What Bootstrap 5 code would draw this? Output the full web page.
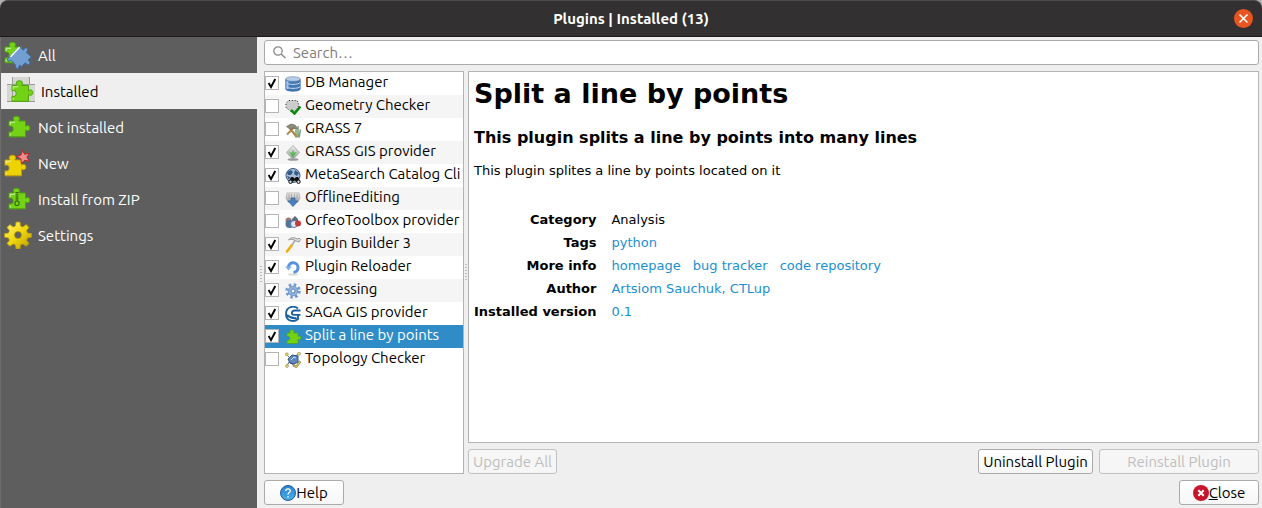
<!DOCTYPE html>
<html lang="en">
<head>
<meta charset="utf-8">
<meta name="viewport" content="width=device-width, initial-scale=1">
<title>Plugins | Installed (13)</title>
<link href="https://cdn.jsdelivr.net/npm/bootstrap@5.3.0/dist/css/bootstrap.min.css" rel="stylesheet">
<style>
  body { font: 15px/20px Ubuntu, "Noto Sans", sans-serif; color: #000; background: #efefef; }
  svg { flex: none; display: block; }
  .titlebar { height: 37px; background: #323030; border-top: 1px solid #4b4b4b; border-bottom: 1px solid #1c1c1c; border-radius: 8px 8px 0 0; color: #fff; font-weight: 700; }
  .frame { background: #b5b0ae; }
  .win-close { right: 9px; top: 8px; width: 19px; height: 19px; border: 0; padding: 0; border-radius: 50%; background: #e95420; }
  .sidebar { width: 257px; background: #5e5e5e; border-left: 1px solid #6c6c6c; }
  .side-link { height: 36px; padding-left: 3px; gap: 6px; color: #fff; text-decoration: none; }
  .side-link span { padding-top: 2px; }
  .side-link.current { background: #efefef; color: #000; padding-left: 6px; }
  .workspace { padding: 3px 3px 3px 7px; gap: 6px; min-width: 0; }
  .search { height: 25px; border: 1px solid #aaa; border-radius: 3px; background: #fff; padding: 0 8px; gap: 7px; }
  .search input { border: 0; outline: 0; background: none; padding: 0; min-width: 0; line-height: 20px; }
  .search input::placeholder { color: #7e7e7e; opacity: 1; }
  .panel { background: #fff; border: 1px solid #b4b4b4; }
  .plugins { width: 200px; overflow: hidden; }
  .plugins label { height: 23px; gap: 4px; white-space: nowrap; }
  .plugins label span { padding-bottom: 4px; }
  .plugins li:nth-child(even) { background: #f5f5f5; }
  .plugins li.chosen { background: #308cc6; color: #fff; }
  .plugins svg { margin: 0 0 0 2px; }
  .tick { appearance: none; flex: none; width: 14px; height: 14px; margin: 0 0 1px; border: 1px solid #b4b4b4; background: #fff; }
  .tick:checked { background: #fff url("data:image/svg+xml,%3Csvg xmlns='http://www.w3.org/2000/svg' viewBox='0 0 12 12'%3E%3Cpath d='M2.6 6l2.4 4L9.3 2' fill='none' stroke='%23000' stroke-width='1.9'/%3E%3C/svg%3E"); }
  .splitter { width: 4px; }
  .grip { width: 2px; height: 17px; background: repeating-linear-gradient(#bbb 0 1px, transparent 1px 3px); }
  .grip-left { left: 260px; top: 229px; }
  .details { font-family: "DejaVu Sans", sans-serif; font-size: 13px; line-height: 23px; padding: 5px; overflow: auto; }
  .details h1 { font-size: 27px; line-height: 34px; font-weight: 700; margin: 0 0 17px; }
  .details h2 { font-size: 16px; line-height: 20px; font-weight: 700; margin: 0 0 11px; }
  .details p { margin: 0 0 26px; }
  .details th { text-align: right; padding: 0 15px 0 0; }
  .details td { padding: 0 12px 0 0; }
  .details a { color: #1a90d0; text-decoration: none; }
  .details td a + a { margin-left: 12px; }
  .actions { gap: 6px; margin-top: 6px; }
  .push { height: 25px; border: 1px solid #aaa; border-radius: 3px; padding: 0 2px; line-height: 20px; color: #000; background: linear-gradient(#fff, #f6f6f6); min-width: 80px; }
  .push:disabled { color: #bebebe; border-color: #c2c2c2; background: #f6f6f6; opacity: 1; }
  .push-wide { min-width: 160px; }
  .push-mid { min-width: 115px; }
  .push-small { min-width: 89px; }
</style>
</head>
<body>
<svg width="0" height="0" class="position-absolute" aria-hidden="true">
  <defs>
    <linearGradient id="gold" x1="0" y1="0" x2="1" y2="1"><stop offset="0" stop-color="#fff27a"/><stop offset=".5" stop-color="#f0d60c"/><stop offset="1" stop-color="#b99a00"/></linearGradient>
    <linearGradient id="lens" x1="0" y1="0" x2="0" y2="1"><stop offset="0" stop-color="#2c7fd0"/><stop offset="1" stop-color="#49b0ea"/></linearGradient>
    <linearGradient id="silver" x1="0" y1="0" x2="0" y2="1"><stop offset="0" stop-color="#f2f2f2"/><stop offset="1" stop-color="#9b9b9b"/></linearGradient>
    <path id="piece" d="M1 5h4.800c.7 0-.6-1-.6-2.200a3.200 2.600 0 0 1 6.400 0c0 1.200-1.300 2.200-.6 2.200H17.500v5.200c1-1 4.300-1.500 4.300 1.900s-3.300 2.900-4.300 1.900v6.800H1v-5c2.800.8 4.200-.7 4.200-2.800S3.800 9.300 1 10.300z"/>
    <path id="shine" d="M2.200 9V6.200h5M2.200 19.500v-2" fill="none" stroke="#fff" stroke-opacity=".7"/>
  </defs>
</svg>
<div class="d-flex flex-column min-vh-100">
  <div class="frame">
    <header class="titlebar position-relative d-flex align-items-center justify-content-center">
      <span>Plugins | Installed (13)</span>
      <button class="win-close position-absolute" aria-label="Close window"><svg width="19" height="19" viewBox="0 0 19 19"><path d="M5.500 5.500l8 8m0-8l-8 8" stroke="#fff" stroke-width="1.600"/></svg></button>
    </header>
  </div>
  <div class="d-flex flex-grow-1 position-relative">
    <nav class="sidebar flex-shrink-0">
      <a href="#" class="side-link d-flex align-items-center">
        <svg width="28" height="28" viewBox="0 0 28 28"><g transform="translate(0 1)"><use href="#piece" fill="#73d216" stroke="#4fa30a"/><use href="#shine"/></g>
          <path d="M5 16.500L15.500 5.500l3.800 3.800c1-.4.700-3 3.300-2.300 2 1 .6 3-.3 4.500l5 4.300-3.300 3.200c.5.800 3.200 2.200 1.200 4.300-1.700 1-3-.5-4-1.500l-3.500 3.600-2.200-1.200-1.300 3.300-2.200-.1-.6-3.500-4-4.400-3.200.6-.8-2z" fill="#729fcf" stroke="#3a6cab"/><path d="M6.500 15.800l9-9.500" stroke="#fff" stroke-width="1.500"/></svg>
        <span>All</span></a>
      <a href="#" class="side-link current d-flex align-items-center" aria-current="page">
        <svg width="28" height="28" viewBox="0 0 28 28"><path d="M5 0h17v7h6v18h-6v-1H0V7h5z" fill="#d3d7cf"/><path d="M5.500 0v24M22.500 0v7M0 7.500h28M0 24.500h28" stroke="#999b96"/><g transform="translate(4 3.500)"><use href="#piece" fill="#73d216" stroke="#4fa30a"/><use href="#shine"/></g></svg>
        <span>Installed</span></a>
      <a href="#" class="side-link d-flex align-items-center">
        <svg width="28" height="28" viewBox="0 0 28 28"><g transform="translate(4 3)"><use href="#piece" fill="#73d216" stroke="#4fa30a"/><use href="#shine"/></g></svg>
        <span>Not installed</span></a>
      <a href="#" class="side-link d-flex align-items-center">
        <svg width="28" height="28" viewBox="0 0 28 28"><g transform="translate(0 6)"><use href="#piece" fill="#edd400" stroke="#c4a000"/><use href="#shine"/></g><path d="M18.500 1.500l2.200 3.800 5-1.200-2.800 4 2.500 4.200-4.700-1-3.300 3.500-.5-5-4.500-2.200 4.500-1.600z" fill="#f28b8b" stroke="#b82525"/></svg>
        <span>New</span></a>
      <a href="#" class="side-link d-flex align-items-center">
        <svg width="28" height="28" viewBox="0 0 28 28"><g transform="translate(4 3)"><use href="#piece" fill="#73d216" stroke="#4fa30a"/><use href="#shine"/><path d="M9 4v9" stroke="#33650b" stroke-width="3" stroke-dasharray="1 1.200"/><path d="M9 4v10" stroke="#33650b" stroke-width=".6"/><rect x="7" y="13" width="4" height="4.500" rx="1.500" fill="none" stroke="#33650b" stroke-width="1.200"/></g></svg>
        <span>Install from ZIP</span></a>
      <a href="#" class="side-link d-flex align-items-center">
        <svg width="28" height="28" viewBox="0 0 28 28"><path fill="url(#gold)" stroke="#b59a00" stroke-width=".8" fill-rule="evenodd" d="M12 1h4l.6 4 2.200.9 3.400-2.300 2.800 2.800-2.400 3.300 1 2.300 3.900.6v3.600l-3.900.7-1 2.300 2.400 3.300-2.800 2.800-3.400-2.300-2.200.9-.6 4h-4l-.6-4-2.200-.9-3.400 2.300L3 22.500l2.400-3.300-1-2.300-3.900-.7v-3.600l3.900-.6 1-2.300L3 6.400l2.800-2.800 3.400 2.300 2.200-.9zM14 10.500a3.500 3.500 0 1 0 0 7 3.500 3.500 0 0 0 0-7z"/></svg>
        <span>Settings</span></a>
    </nav>
    <span class="grip grip-left position-absolute"></span>
    <main class="workspace d-flex flex-column flex-grow-1">
      <div class="search d-flex align-items-center">
        <svg width="13" height="13" viewBox="0 0 13 13"><circle cx="5" cy="5" r="4.200" fill="none" stroke="#8a8a8a" stroke-width="1.300"/><path d="M8 8l4.500 4" stroke="#8a8a8a" stroke-width="1.500"/></svg>
        <input class="flex-grow-1" type="search" placeholder="Search…" aria-label="Search plugins">
      </div>
      <div class="d-flex flex-grow-1">
        <ul class="plugins panel list-unstyled mb-0 flex-shrink-0">
          <li><label class="d-flex align-items-center"><input class="tick" type="checkbox" checked><svg width="16" height="16" viewBox="0 0 16 16"><path d="M.7 3v10c0 3 14.600 3 14.600 0V3" fill="#4377b2" stroke="#3467a4" stroke-width=".6"/><path d="M1 6.500c1 2.500 13 2.500 14 0M1 10.500c1 2.500 13 2.500 14 0" fill="none" stroke="#c5daf2"/><path d="M2.500 5v8" stroke="#a9c6e6" stroke-width="2"/><ellipse cx="8" cy="3" rx="7.300" ry="2.300" fill="#b9cde4" stroke="#6088b9" stroke-width=".6"/></svg><span>DB Manager</span></label></li>
          <li><label class="d-flex align-items-center"><input class="tick" type="checkbox"><svg width="16" height="16" viewBox="0 0 16 16"><path d="M4 1.500h8L14 6l-3 6-5 .5L1 8.500V4z" fill="#ccc" stroke="#222" stroke-dasharray="1 1.800"/><path d="M6 11l3.500 3.500L15.500 7.500" fill="none" stroke="#078a0b" stroke-width="2.500"/></svg><span>Geometry Checker</span></label></li>
          <li><label class="d-flex align-items-center"><input class="tick" type="checkbox"><svg width="16" height="16" viewBox="0 0 16 16"><path d="M11 15.500V8m2 7.500V4m1 11.500l1.500-8M11 15L8 9" stroke="#74a17a" stroke-width="1.500"/><path d="M2 12.500l7-7M5 7l7 8" stroke="#b38a4d" stroke-width="2"/><path d="M1.500 4.500L6 2l4 1 2.500 3.500-1.500 1L8 5.500 6 8 4 6.500z" fill="#8c8d78" stroke="#4d4d42" stroke-width=".5"/></svg><span>GRASS 7</span></label></li>
          <li><label class="d-flex align-items-center"><input class="tick" type="checkbox" checked><svg width="16" height="16" viewBox="0 0 16 16"><ellipse cx="8" cy="14.500" rx="5.500" ry="1.300" fill="#999"/><path d="M8 .5l6.500 7L8 14.500 1.500 7.500z" fill="url(#silver)" stroke="#999" stroke-width=".7"/><path d="M8 13L4 6.500l3 1.500 1-4 1 4 3-1.500z" fill="#58b957"/></svg><span>GRASS GIS provider</span></label></li>
          <li><label class="d-flex align-items-center"><input class="tick" type="checkbox" checked><svg width="16" height="16" viewBox="0 0 16 16"><circle cx="8" cy="7.500" r="7" fill="#a8bfd8" stroke="#345a87"/><path d="M2 4l4-2 2 2-2 3H3zM10 2l4 3-2 3-3-2zM2 8l3 1-1 3z" fill="#345a87"/><path d="M4 13l2-4h2l1.500 1.500L11 9h2l2.500 4.500h-4l-2-1-2 1.500z" fill="#111"/><circle cx="5.500" cy="13.800" r="1.700" fill="#ddd" stroke="#111"/><circle cx="13.500" cy="13.800" r="1.700" fill="#ddd" stroke="#111"/></svg><span>MetaSearch Catalog Cli</span></label></li>
          <li><label class="d-flex align-items-center"><input class="tick" type="checkbox"><svg width="16" height="16" viewBox="0 0 16 16"><path d="M2 2h12l1 5-2 4H3L1 7z" fill="url(#silver)" stroke="#999" stroke-width=".6"/><path d="M4 3v5m2.500-5v5m3-5v5M12 3v5" stroke="#aaa"/><path d="M6 7h4v3h3l-5 5.500L3 10h3z" fill="#4c7fc1" stroke="#2d5f9e" stroke-width=".7"/></svg><span>OfflineEditing</span></label></li>
          <li><label class="d-flex align-items-center"><input class="tick" type="checkbox"><svg width="16" height="16" viewBox="0 0 16 16"><circle cx="3.500" cy="6.500" r="3" fill="#a17777"/><circle cx="4.500" cy="10" r="4" fill="#52739b"/><path d="M7 5l3-3 3 3v7l-3 1-4-3z" fill="#5c6b83"/><circle cx="9" cy="10" r="3.500" fill="#dce8f4" stroke="#52739b"/><circle cx="13" cy="9.500" r="3" fill="#c43a3a"/></svg><span>OrfeoToolbox provider</span></label></li>
          <li><label class="d-flex align-items-center"><input class="tick" type="checkbox" checked><svg width="16" height="16" viewBox="0 0 16 16"><path d="M10 3.500L6 9.500" stroke="#aaa" stroke-width="1.700"/><path d="M6.500 8.500L2 14.500" stroke="#efac14" stroke-width="2.600" stroke-linecap="round"/><path d="M3.500 3C5.500.5 8.500 0 11 1.500l2 .5 1-1 1.500 1.500L14 5l-4-1.500C7.500 2 6 2 3.500 3z" fill="#ddd" stroke="#888" stroke-width=".8"/></svg><span>Plugin Builder 3</span></label></li>
          <li><label class="d-flex align-items-center"><input class="tick" type="checkbox" checked><svg width="16" height="16" viewBox="0 0 16 16"><ellipse cx="8" cy="14.500" rx="5" ry="1.200" fill="#ddd"/><path d="M3.500 7.500C3.500 1 13 1.500 13 7.500c0 2.500-1.500 4.800-4.500 4.800" fill="none" stroke="#5891dc" stroke-width="3"/><path d="M0 6.500h7L3.500 10.500z" fill="#7fb0ec"/></svg><span>Plugin Reloader</span></label></li>
          <li><label class="d-flex align-items-center"><input class="tick" type="checkbox" checked><svg width="16" height="16" viewBox="0 0 16 16"><circle cx="8" cy="8" r="6.200" fill="none" stroke="#6f9bd0" stroke-width="3" stroke-dasharray="2.430 2.430"/><circle cx="8" cy="8" r="4.800" fill="#8fb2de" stroke="#5c89bf" stroke-width=".7"/><circle cx="8" cy="8" r="2" fill="#f5f5f5" stroke="#5c89bf"/></svg><span>Processing</span></label></li>
          <li><label class="d-flex align-items-center"><input class="tick" type="checkbox" checked><svg width="16" height="16" viewBox="0 0 16 16"><path d="M13 2.500C9-.8 1 .5 1 8s8 8.500 12 5V8.800H9M15.500 4.500H10C6.500 4.500 5.500 8.800 9 8.800h6.500M2 9c2 2 5 3.500 9.500 3" fill="none" stroke="#1a5f9e" stroke-width="1.800"/></svg><span>SAGA GIS provider</span></label></li>
          <li class="chosen"><label class="d-flex align-items-center"><input class="tick" type="checkbox" checked><svg width="16" height="16" viewBox="-2 -1 24 24"><use href="#piece" fill="#73d216" stroke="#4fa30a"/></svg><span>Split a line by points</span></label></li>
          <li><label class="d-flex align-items-center"><input class="tick" type="checkbox"><svg width="16" height="16" viewBox="0 0 16 16"><path d="M1.500 2.500L4 5M10 4l4-2M2 14l2-4 6 4" fill="none" stroke="#666"/><path d="M3 7l4-4 6 1v6l-4 2-4-1z" fill="#5f88bd" stroke="#2d5482"/><path d="M6 8l3-3 2 1" fill="none" stroke="#cfe0f3"/><path d="M9 12.500l2 1.500L14.500 9l1.300 1-4.300 5.800L8 14z" fill="#e8d36c" stroke="#776b28" stroke-width=".7"/><g fill="#ecd940" stroke="#888" stroke-width=".6"><circle cx="1.800" cy="2.300" r="1.500"/><circle cx="2" cy="14" r="1.500"/><circle cx="14" cy="1.800" r="1.500"/></g></svg><span>Topology Checker</span></label></li>
        </ul>
        <div class="splitter flex-shrink-0 d-flex justify-content-center align-items-center"><span class="grip"></span></div>
        <div class="d-flex flex-column flex-grow-1">
          <article class="details panel flex-grow-1">
            <h1>Split a line by points</h1>
            <h2>This plugin splits a line by points into many lines</h2>
            <p>This plugin splites a line by points located on it</p>
            <table>
              <tr><th scope="row">Category</th><td>Analysis</td></tr>
              <tr><th scope="row">Tags</th><td><a href="#">python</a></td></tr>
              <tr><th scope="row">More info</th><td><a href="#">homepage</a><a href="#">bug tracker</a><a href="#">code repository</a></td></tr>
              <tr><th scope="row">Author</th><td><a href="#">Artsiom Sauchuk, CTLup</a></td></tr>
              <tr><th scope="row">Installed version</th><td><a href="#">0.1</a></td></tr>
            </table>
          </article>
          <div class="d-flex actions">
            <button class="push push-small me-auto" disabled>Upgrade All</button>
            <button class="push push-mid">Uninstall Plugin</button>
            <button class="push push-wide" disabled>Reinstall Plugin</button>
          </div>
        </div>
      </div>
      <div class="d-flex justify-content-between">
        <button class="push d-flex align-items-center justify-content-center"><svg width="16" height="16" viewBox="0 0 16 16"><circle cx="8" cy="8" r="7.500" fill="url(#lens)" stroke="#2a5e93"/><path d="M5.700 6c.2-3 4.800-2.600 4.600 0-.2 1.500-2.300 1.700-2.300 3.500M8 11v1.500" fill="none" stroke="#fff" stroke-width="1.300"/></svg>Help</button>
        <button class="push d-flex align-items-center justify-content-center"><svg width="16" height="16" viewBox="0 0 16 16"><circle cx="8" cy="8" r="8" fill="#c7162b"/><path d="M5.300 5.300l5.400 5.400m0-5.400l-5.400 5.400" stroke="#fff" stroke-width="2"/></svg><span><u>C</u>lose</span></button>
      </div>
    </main>
  </div>
</div>
<script src="https://cdn.jsdelivr.net/npm/bootstrap@5.3.0/dist/js/bootstrap.bundle.min.js"></script>
</body>
</html>
